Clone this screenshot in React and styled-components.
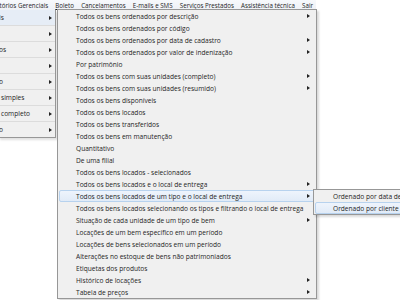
import React from "react";
import styled, {createGlobalStyle} from "styled-components";

const GlobalStyle = createGlobalStyle`
    body {
        margin: 0;
        background: #ffffff;
        font-family: "Open Sans", "Liberation Sans", sans-serif;
    }
`;

const Page = styled.div`
    position: relative;
    width: 400px;
    height: 300px;
    overflow: hidden;
    background: #ffffff;
    font-size: 6.6px;
    color: #1e1e1e;
`;

const MenuBar = styled.div`
    display: flex;
    align-items: center;
    width: 320px;
    height: 10px;
    margin-left: -4px;
    background: linear-gradient(#f7f9fc, #eef1f6);
    font-size: 6.2px;
    white-space: nowrap;
`;

const BarItem = styled.div`
    padding: 0 3.6px;
    line-height: 9px;
`;

const Key = styled.span`
    text-decoration: underline;
`;

const Drops = styled.div`
    display: flex;
    align-items: flex-start;
`;

const LeftMenu = styled.div`
    width: 56px;
    margin-left: -2px;
    border: 1px solid #979797;
    border-top: none;
    background: #f0f0f0;
    box-shadow: 2px 2px 2px rgba(0, 0, 0, 0.12);
`;

const LeftRow = styled.div`
    display: flex;
    align-items: center;
    justify-content: space-between;
    height: 15px;
    padding-left: ${p => p.indent}px;
    padding-right: 3px;
    border-bottom: 1px solid #dcdcdc;
    background: ${p => (p.active ? "#e6edf6" : "transparent")};
    white-space: nowrap;
    &:last-child {
        border-bottom: none;
    }
`;

const MainMenu = styled.div`
    width: 258px;
    margin-left: 1px;
    margin-top: -1px;
    border: 1px solid #979797;
    background: #f0f0f0;
    box-shadow: 2px 2px 2px rgba(0, 0, 0, 0.15);
`;

const Row = styled.div`
    position: relative;
    display: flex;
    align-items: center;
    justify-content: space-between;
    height: 12px;
    margin: 0 1px;
    padding-left: 16px;
    padding-right: 4px;
    box-sizing: border-box;
    border: 1px solid ${p => (p.active ? "#b7d2ee" : "transparent")};
    border-radius: 2px;
    background: ${p => (p.active ? "linear-gradient(#eef4fc, #e1ebf7)" : "transparent")};
    white-space: nowrap;
`;

const Arrow = styled.span`
    width: 0;
    height: 0;
    border-left: 3px solid #222222;
    border-top: 2.5px solid transparent;
    border-bottom: 2.5px solid transparent;
`;

const SubMenu = styled.div`
    position: absolute;
    left: 253px;
    top: -2px;
    width: 100px;
    padding: 0 1px;
    border: 1px solid #979797;
    background: #f0f0f0;
    box-shadow: 2px 2px 2px rgba(0, 0, 0, 0.15);
`;

const SubRow = styled(Row)`
    margin: 0;
    padding-left: 17px;
`;

const barItems = [
    <>tórios Gerenciais</>,
    <><Key>B</Key>oleto</>,
    <>C<Key>a</Key>ncelamentos</>,
    <>E-<Key>m</Key>ails e SMS</>,
    <>Ser<Key>v</Key>iços Prestados</>,
    <>Assistência técnica</>,
    <><Key>S</Key>air</>
];

const leftItems = [
    {text: "is", indent: 0, active: true},
    {text: "", indent: 0},
    {text: "os", indent: 0},
    {text: "", indent: 0},
    {text: "o", indent: 0},
    {text: "simples", indent: 2},
    {text: "completo", indent: 2},
    {text: "o", indent: 0}
];

const items = [
    {text: "Todos os bens ordenados por descrição", sub: true},
    {text: "Todos os bens ordenados por código"},
    {text: "Todos os bens ordenados por data de cadastro", sub: true},
    {text: "Todos os bens ordenados por valor de indenização", sub: true},
    {text: "Por patrimônio"},
    {text: "Todos os bens com suas unidades (completo)", sub: true},
    {text: "Todos os bens com suas unidades (resumido)", sub: true},
    {text: "Todos os bens disponíveis"},
    {text: "Todos os bens locados"},
    {text: "Todos os bens transferidos"},
    {text: "Todos os bens em manutenção"},
    {text: "Quantitativo"},
    {text: "De uma filial"},
    {text: "Todos os bens locados - selecionados"},
    {text: "Todos os bens locados e o local de entrega", sub: true},
    {text: "Todos os bens locados de um tipo e o local de entrega", sub: true, open: true},
    {text: "Todos os bens locados selecionando os tipos e filtrando o local de entrega"},
    {text: "Situação de cada unidade de um tipo de bem", sub: true},
    {text: "Locações de um bem específico em um período"},
    {text: "Locações de bens selecionados em um período"},
    {text: "Alterações no estoque de bens não patrimoniados"},
    {text: "Etiquetas dos produtos"},
    {text: "Histórico de locações", sub: true},
    {text: "Tabela de preços", sub: true}
];

const App = () => (
    <Page>
        <GlobalStyle />
        <MenuBar>
            {barItems.map((label, n) => (
                <BarItem key={n}>{label}</BarItem>
            ))}
        </MenuBar>
        <Drops>
            <LeftMenu>
                {leftItems.map((item, n) => (
                    <LeftRow key={n} indent={item.indent} active={item.active}>
                        <span>{item.text}</span>
                        <Arrow />
                    </LeftRow>
                ))}
            </LeftMenu>
            <MainMenu>
                {items.map(item => (
                    <Row key={item.text} active={item.open}>
                        <span>{item.text}</span>
                        {item.sub && <Arrow />}
                        {item.open && (
                            <SubMenu>
                                <SubRow>Ordenado por data de alocação</SubRow>
                                <SubRow active>Ordenado por cliente</SubRow>
                            </SubMenu>
                        )}
                    </Row>
                ))}
            </MainMenu>
        </Drops>
    </Page>
);

export default App;
